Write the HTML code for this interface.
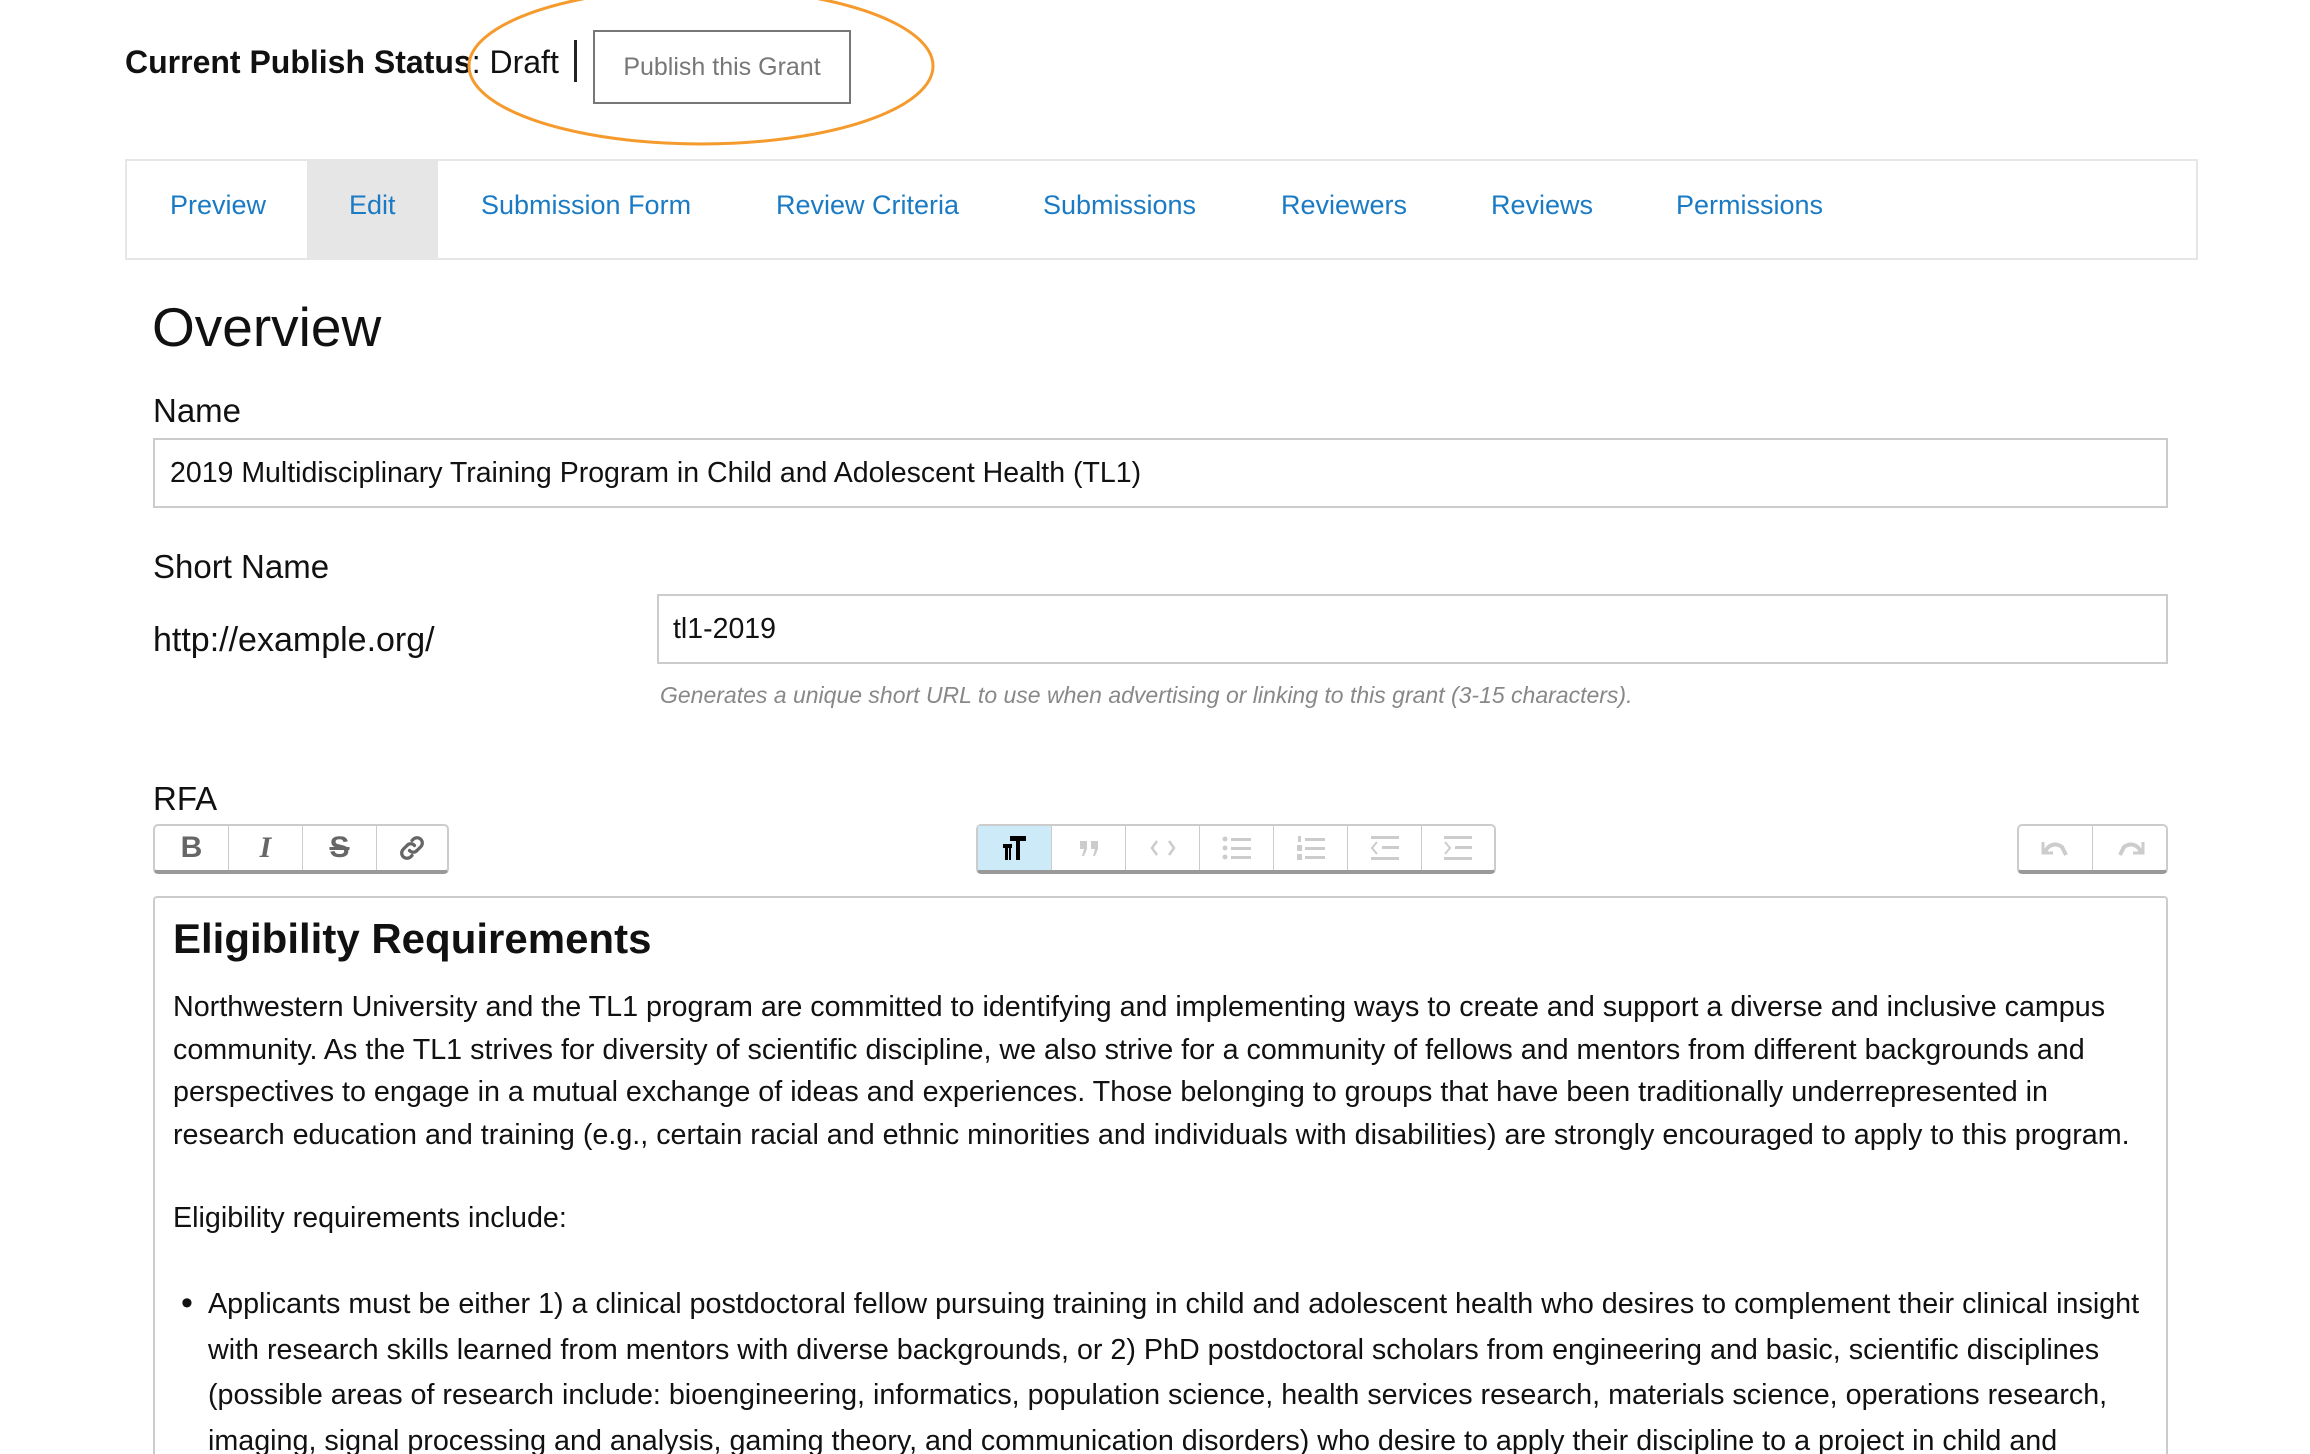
<!DOCTYPE html>
<html style="overflow:hidden;height:1454px"><head><meta charset="utf-8"><style>
body{margin:0;width:2310px;height:1454px;overflow:hidden;background:#fff;font-family:"Liberation Sans",Arial,sans-serif;color:#111;position:relative}
.a{position:absolute;white-space:nowrap}
.tab{position:absolute;top:190px;font-size:27px;color:#1a7bc4}
.btn{position:absolute;top:0;height:44px;border-right:1px solid #ccc;box-sizing:border-box;display:flex;align-items:center;justify-content:center;color:#666}
.grp{position:absolute;top:824px;height:44px;border:2px solid #ccc;border-bottom:4px solid #999;border-radius:5px;background:#fff;box-sizing:content-box}
p.l{margin:0}
</style></head><body>
<div class="a" style="left:125px;top:44px;font-size:32px"><b>Current Publish Status</b>: Draft</div>
<div class="a" style="left:574px;top:40px;width:3px;height:42px;background:#222"></div>
<div class="a" style="left:593px;top:30px;width:254px;height:70px;border:2px solid #777;font-size:25px;color:#777;display:flex;align-items:center;justify-content:center">Publish this Grant</div>
<svg class="a" style="left:0;top:0" width="1000" height="160"><ellipse cx="701" cy="66" rx="232" ry="78" fill="none" stroke="#f59a2c" stroke-width="3"/></svg>
<div class="a" style="left:125px;top:159px;width:2069px;height:97px;border:2px solid #e6e6e6"></div>
<div class="a" style="left:307px;top:161px;width:131px;height:97px;background:#e6e6e6"></div>
<div class="tab" style="left:170px">Preview</div>
<div class="tab" style="left:349px">Edit</div>
<div class="tab" style="left:481px">Submission Form</div>
<div class="tab" style="left:776px">Review Criteria</div>
<div class="tab" style="left:1043px">Submissions</div>
<div class="tab" style="left:1281px">Reviewers</div>
<div class="tab" style="left:1491px">Reviews</div>
<div class="tab" style="left:1676px">Permissions</div>
<div class="a" style="left:152px;top:295px;font-size:55px">Overview</div>
<div class="a" style="left:153px;top:392px;font-size:33px">Name</div>
<div class="a" style="left:153px;top:438px;width:2011px;height:66px;border:2px solid #ccc"></div>
<div class="a" style="left:170px;top:457px;font-size:28.5px">2019 Multidisciplinary Training Program in Child and Adolescent Health (TL1)</div>
<div class="a" style="left:153px;top:548px;font-size:33px">Short Name</div>
<div class="a" style="left:153px;top:621px;font-size:34px">http://example.org/</div>
<div class="a" style="left:657px;top:594px;width:1507px;height:66px;border:2px solid #ccc"></div>
<div class="a" style="left:673px;top:613px;font-size:28.5px">tl1-2019</div>
<div class="a" style="left:660px;top:682px;font-size:23px;font-style:italic;color:#888">Generates a unique short URL to use when advertising or linking to this grant (3-15 characters).</div>
<div class="a" style="left:153px;top:780px;font-size:33px">RFA</div>
<div class="grp" style="left:153px;width:292px">
<div class="btn" style="left:0;width:74px;font-weight:bold;font-size:30px">B</div>
<div class="btn" style="left:74px;width:74px;font-style:italic;font-weight:bold;font-size:30px;font-family:'Liberation Serif',serif">I</div>
<div class="btn" style="left:148px;width:74px;font-weight:bold;font-size:30px;text-decoration:line-through">S</div>
<div class="btn" style="left:222px;width:70px;border:none"><svg width="30" height="30" viewBox="0 0 24 24" fill="none" stroke="#666" stroke-width="2.6" stroke-linecap="round"><path d="M10 14a4 4 0 0 0 6 0l3-3a4 4 0 0 0-6-6l-1 1"/><path d="M14 10a4 4 0 0 0-6 0l-3 3a4 4 0 0 0 6 6l1-1"/></svg></div>
</div>
<div class="grp" style="left:976px;width:516px">
<div class="btn" style="left:0;width:74px;background:#cdeaf8"><svg width="30" height="30" viewBox="0 0 30 30" fill="#000"><rect x="10" y="3" width="16" height="5"/><rect x="16" y="3" width="4" height="24"/><rect x="3" y="11" width="9" height="4"/><rect x="5" y="11" width="3" height="16"/><rect x="9" y="11" width="2" height="16"/></svg></div>
<div class="btn" style="left:74px;width:74px"><svg width="30" height="30" viewBox="0 0 30 30" fill="#ccc"><path d="M6 8h7v8l-3 7h-2l2-7h-4z M17 8h7v8l-3 7h-2l2-7h-4z"/></svg></div>
<div class="btn" style="left:148px;width:74px"><svg width="34" height="30" viewBox="0 0 34 30" fill="none" stroke="#ccc" stroke-width="2.5"><path d="M11 8l-5 7 5 7M23 8l5 7-5 7"/></svg></div>
<div class="btn" style="left:222px;width:74px"><svg width="34" height="30" viewBox="0 0 34 30" fill="#ccc"><circle cx="5" cy="6" r="2.5"/><circle cx="5" cy="15" r="2.5"/><circle cx="5" cy="24" r="2.5"/><rect x="11" y="5" width="20" height="3"/><rect x="11" y="14" width="20" height="3"/><rect x="11" y="23" width="20" height="3"/></svg></div>
<div class="btn" style="left:296px;width:74px"><svg width="34" height="30" viewBox="0 0 34 30" fill="#ccc"><rect x="4" y="3" width="3" height="6"/><rect x="3" y="12" width="5" height="6"/><rect x="3" y="21" width="5" height="6"/><rect x="11" y="5" width="20" height="3"/><rect x="11" y="14" width="20" height="3"/><rect x="11" y="23" width="20" height="3"/></svg></div>
<div class="btn" style="left:370px;width:74px"><svg width="34" height="30" viewBox="0 0 34 30" fill="#ccc"><rect x="3" y="3" width="28" height="3"/><rect x="14" y="13" width="17" height="3"/><rect x="3" y="24" width="28" height="3"/><path d="M9 9l-5 6 5 6" fill="none" stroke="#ccc" stroke-width="2"/></svg></div>
<div class="btn" style="left:444px;width:72px;border:none"><svg width="34" height="30" viewBox="0 0 34 30" fill="#ccc"><rect x="3" y="3" width="28" height="3"/><rect x="14" y="13" width="17" height="3"/><rect x="3" y="24" width="28" height="3"/><path d="M4 9l5 6-5 6" fill="none" stroke="#ccc" stroke-width="2"/></svg></div>
</div>
<div class="grp" style="left:2017px;width:147px">
<div class="btn" style="left:0;width:74px"><svg width="34" height="30" viewBox="0 0 34 30" fill="none" stroke="#ccc" stroke-width="4"><path d="M6 20c2-8 10-11 17-6l4 8"/><path d="M4 9v11h10" stroke-width="3"/></svg></div>
<div class="btn" style="left:74px;width:73px;border:none"><svg width="34" height="30" viewBox="0 0 34 30" fill="none" stroke="#ccc" stroke-width="4"><path d="M28 20c-2-8-10-11-17-6l-4 8"/><path d="M30 9v11h-10" stroke-width="3"/></svg></div>
</div>
<div class="a" style="left:153px;top:896px;width:2011px;height:570px;border:2px solid #ccc;border-radius:4px"></div>
<div class="a" style="left:173px;top:915px;font-size:42px;font-weight:bold">Eligibility Requirements</div>
<div class="a" style="left:173px;top:986px;font-size:28.7px;line-height:42.5px">
<p class="l">Northwestern University and the TL1 program are committed to identifying and implementing ways to create and support a diverse and inclusive campus</p>
<p class="l">community. As the TL1 strives for diversity of scientific discipline, we also strive for a community of fellows and mentors from different backgrounds and</p>
<p class="l">perspectives to engage in a mutual exchange of ideas and experiences. Those belonging to groups that have been traditionally underrepresented in</p>
<p class="l">research education and training (e.g., certain racial and ethnic minorities and individuals with disabilities) are strongly encouraged to apply to this program.</p>
</div>
<div class="a" style="left:173px;top:1202px;font-size:28.7px">Eligibility requirements include:</div>
<div class="a" style="left:181px;top:1284px;font-size:34px">•</div>
<div class="a" style="left:208px;top:1282px;font-size:28.7px;line-height:45.5px">
<p class="l">Applicants must be either 1) a clinical postdoctoral fellow pursuing training in child and adolescent health who desires to complement their clinical insight</p>
<p class="l">with research skills learned from mentors with diverse backgrounds, or 2) PhD postdoctoral scholars from engineering and basic, scientific disciplines</p>
<p class="l">(possible areas of research include: bioengineering, informatics, population science, health services research, materials science, operations research,</p>
<p class="l">imaging, signal processing and analysis, gaming theory, and communication disorders) who desire to apply their discipline to a project in child and</p>
</div>
</body></html>
